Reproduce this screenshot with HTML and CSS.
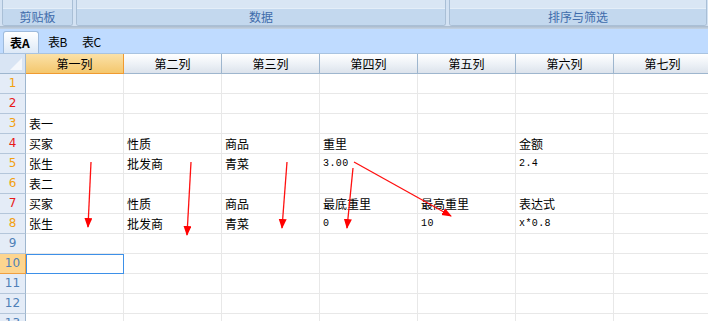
FILE: index.html
```html
<!DOCTYPE html>
<html lang="zh">
<head>
<meta charset="utf-8">
<link rel="stylesheet" href="styles.css">
</head>
<body>
<div class="app">
  <div class="ribbon">
    <div class="group g1"><div class="gtop"></div><div class="glabel">剪贴板</div></div>
    <div class="group g2"><div class="gtop"></div><div class="glabel">数据</div></div>
    <div class="group g3"><div class="gtop"></div><div class="glabel">排序与筛选</div></div>
  </div>
  <div class="ribbon-line"></div>
  <div class="tabs">
    <div class="tab active">表A</div>
    <div class="tab">表B</div>
    <div class="tab">表C</div>
  </div>
  <div class="sheet">
    <div class="grid">
      <div class="corner"><span class="tri"></span></div>
      <div class="ch sel">第一列</div>
      <div class="ch">第二列</div>
      <div class="ch">第三列</div>
      <div class="ch">第四列</div>
      <div class="ch">第五列</div>
      <div class="ch">第六列</div>
      <div class="ch">第七列</div>

      <div class="rh o">1</div><div class="c"></div><div class="c"></div><div class="c"></div><div class="c"></div><div class="c"></div><div class="c"></div><div class="c"></div>
      <div class="rh r">2</div><div class="c"></div><div class="c"></div><div class="c"></div><div class="c"></div><div class="c"></div><div class="c"></div><div class="c"></div>
      <div class="rh o">3</div><div class="c">表一</div><div class="c"></div><div class="c"></div><div class="c"></div><div class="c"></div><div class="c"></div><div class="c"></div>
      <div class="rh r">4</div><div class="c">买家</div><div class="c">性质</div><div class="c">商品</div><div class="c">重里</div><div class="c"></div><div class="c">金额</div><div class="c"></div>
      <div class="rh o">5</div><div class="c">张生</div><div class="c">批发商</div><div class="c">青菜</div><div class="c num">3.00</div><div class="c"></div><div class="c num">2.4</div><div class="c"></div>
      <div class="rh o">6</div><div class="c">表二</div><div class="c"></div><div class="c"></div><div class="c"></div><div class="c"></div><div class="c"></div><div class="c"></div>
      <div class="rh r">7</div><div class="c">买家</div><div class="c">性质</div><div class="c">商品</div><div class="c">最底重里</div><div class="c">最高重里</div><div class="c">表达式</div><div class="c"></div>
      <div class="rh o">8</div><div class="c">张生</div><div class="c">批发商</div><div class="c">青菜</div><div class="c num">0</div><div class="c num">10</div><div class="c num">x*0.8</div><div class="c"></div>
      <div class="rh b">9</div><div class="c"></div><div class="c"></div><div class="c"></div><div class="c"></div><div class="c"></div><div class="c"></div><div class="c"></div>
      <div class="rh b cur">10</div><div class="c active"></div><div class="c"></div><div class="c"></div><div class="c"></div><div class="c"></div><div class="c"></div><div class="c"></div>
      <div class="rh b">11</div><div class="c"></div><div class="c"></div><div class="c"></div><div class="c"></div><div class="c"></div><div class="c"></div><div class="c"></div>
      <div class="rh b">12</div><div class="c"></div><div class="c"></div><div class="c"></div><div class="c"></div><div class="c"></div><div class="c"></div><div class="c"></div>
      <div class="rh b">13</div><div class="c"></div><div class="c"></div><div class="c"></div><div class="c"></div><div class="c"></div><div class="c"></div><div class="c"></div>
    </div>
    <svg class="arrows" width="708" height="270" viewBox="0 54 708 270">
      <defs>
        <marker id="ah" markerWidth="10" markerHeight="10" refX="9" refY="4" orient="auto" markerUnits="userSpaceOnUse">
          <path d="M0,0 L10,4 L0,8 Z" fill="#ff0000"/>
        </marker>
      </defs>
      <g stroke="#ff1010" stroke-width="1.3" fill="none" marker-end="url(#ah)">
        <line x1="91" y1="162" x2="88" y2="227"/>
        <line x1="191" y1="162" x2="187" y2="235"/>
        <line x1="287" y1="162" x2="282" y2="228"/>
        <line x1="353" y1="168" x2="347" y2="228"/>
        <line x1="354" y1="162" x2="451" y2="216"/>
      </g>
    </svg>
  </div>
</div>
</body>
</html>
```

FILE: styles.css
```css
html, body {
  margin: 0;
  padding: 0;
  width: 708px;
  height: 321px;
  overflow: hidden;
  background: #ffffff;
}

.app {
  font-family: "Noto Sans CJK SC", "Liberation Sans", sans-serif;
  font-size: 12px;
  color: #000;
}

.ribbon {
  display: flex;
  height: 26px;
  background: #d3e2f3;
  padding: 0 0 0 2px;
  gap: 3px;
  box-sizing: border-box;
}

.group {
  display: flex;
  flex-direction: column;
  height: 26px;
  box-sizing: border-box;
  border: 1px solid #a9bfd6;
  border-top: none;
  border-radius: 0 0 3px 3px;
  background: #d6e5f4;
  overflow: hidden;
}
.g1 { width: 71px; }
.g2 { width: 370px; }
.g3 { width: 258px; }

.gtop {
  height: 8px;
  background: #d9e6f4;
  border-bottom: 1px solid #e4eef8;
}

.glabel {
  flex: 1;
  background: #c3d8ee;
  color: #3f6cab;
  text-align: center;
  line-height: 16px;
  font-size: 12px;
}

.ribbon-line {
  height: 3px;
  background: linear-gradient(#a8b9cc, #c6d4e3);
}

.tabs {
  display: flex;
  align-items: flex-end;
  height: 25px;
  background: #bfdbff;
  padding-left: 3px;
  box-sizing: border-box;
  border-bottom: 1px solid #a9c3e0;
}

.tab {
  height: 22px;
  line-height: 22px;
  padding: 0 6px 0 9px;
  font-size: 12px;
  box-sizing: border-box;
  letter-spacing: -0.5px;
}
.tab.active {
  font-weight: bold;
  width: 36px;
  padding: 0 6px;
  letter-spacing: 0;
  background: linear-gradient(#ffffff, #dde9f7);
  border: 1px solid #9fbbdc;
  border-bottom: none;
  border-radius: 3px 3px 0 0;
}

.sheet {
  position: relative;
}

.grid {
  display: grid;
  grid-template-columns: 26px repeat(7, 98px);
  grid-auto-rows: 20px;
}

.corner {
  position: relative;
  background: #d9e5f4;
  border-right: 1px solid #9eb6ce;
  border-bottom: 1px solid #9eb6ce;
  box-sizing: border-box;
}
.tri {
  position: absolute;
  right: 3px;
  bottom: 3px;
  width: 0;
  height: 0;
  border-left: 12px solid transparent;
  border-bottom: 12px solid #f5f8fc;
}

.ch {
  background: linear-gradient(#ffffff 0%, #eef2f7 50%, #dce3ec 100%);
  border-right: 1px solid #9eb6ce;
  border-bottom: 1px solid #9eb6ce;
  box-sizing: border-box;
  text-align: center;
  line-height: 19px;
  font-size: 12px;
}
.ch.sel {
  background: linear-gradient(#fbe1a8, #f4c76d);
  border-bottom: 1px solid #f09a30;
  border-right: 1px solid #f09a30;
}

.rh {
  background: #e4ecf7;
  border-right: 1px solid #9eb6ce;
  border-bottom: 1px solid #b4c6da;
  box-sizing: border-box;
  text-align: center;
  line-height: 19px;
  font-family: "DejaVu Sans", sans-serif;
  font-size: 12px;
}
.rh.o { color: #f2a010; }
.rh.r { color: #e81818; }
.rh.b { color: #4f80b8; }
.rh.cur {
  background: #fdd58f;
  border-bottom: 1px solid #f0a040;
  border-right: 1px solid #f0a040;
}

.c {
  border-right: 1px solid #e8e8e8;
  border-bottom: 1px solid #e8e8e8;
  box-sizing: border-box;
  padding-left: 3px;
  line-height: 19px;
  white-space: nowrap;
  overflow: hidden;
}
.c.num {
  font-family: "Liberation Mono", "DejaVu Sans Mono", monospace;
  font-size: 10px;
  letter-spacing: 0.4px;
}
.c.active {
  border: 1px solid #3d90e8;
}

.arrows {
  position: absolute;
  left: 0;
  top: 0;
  pointer-events: none;
}
```
